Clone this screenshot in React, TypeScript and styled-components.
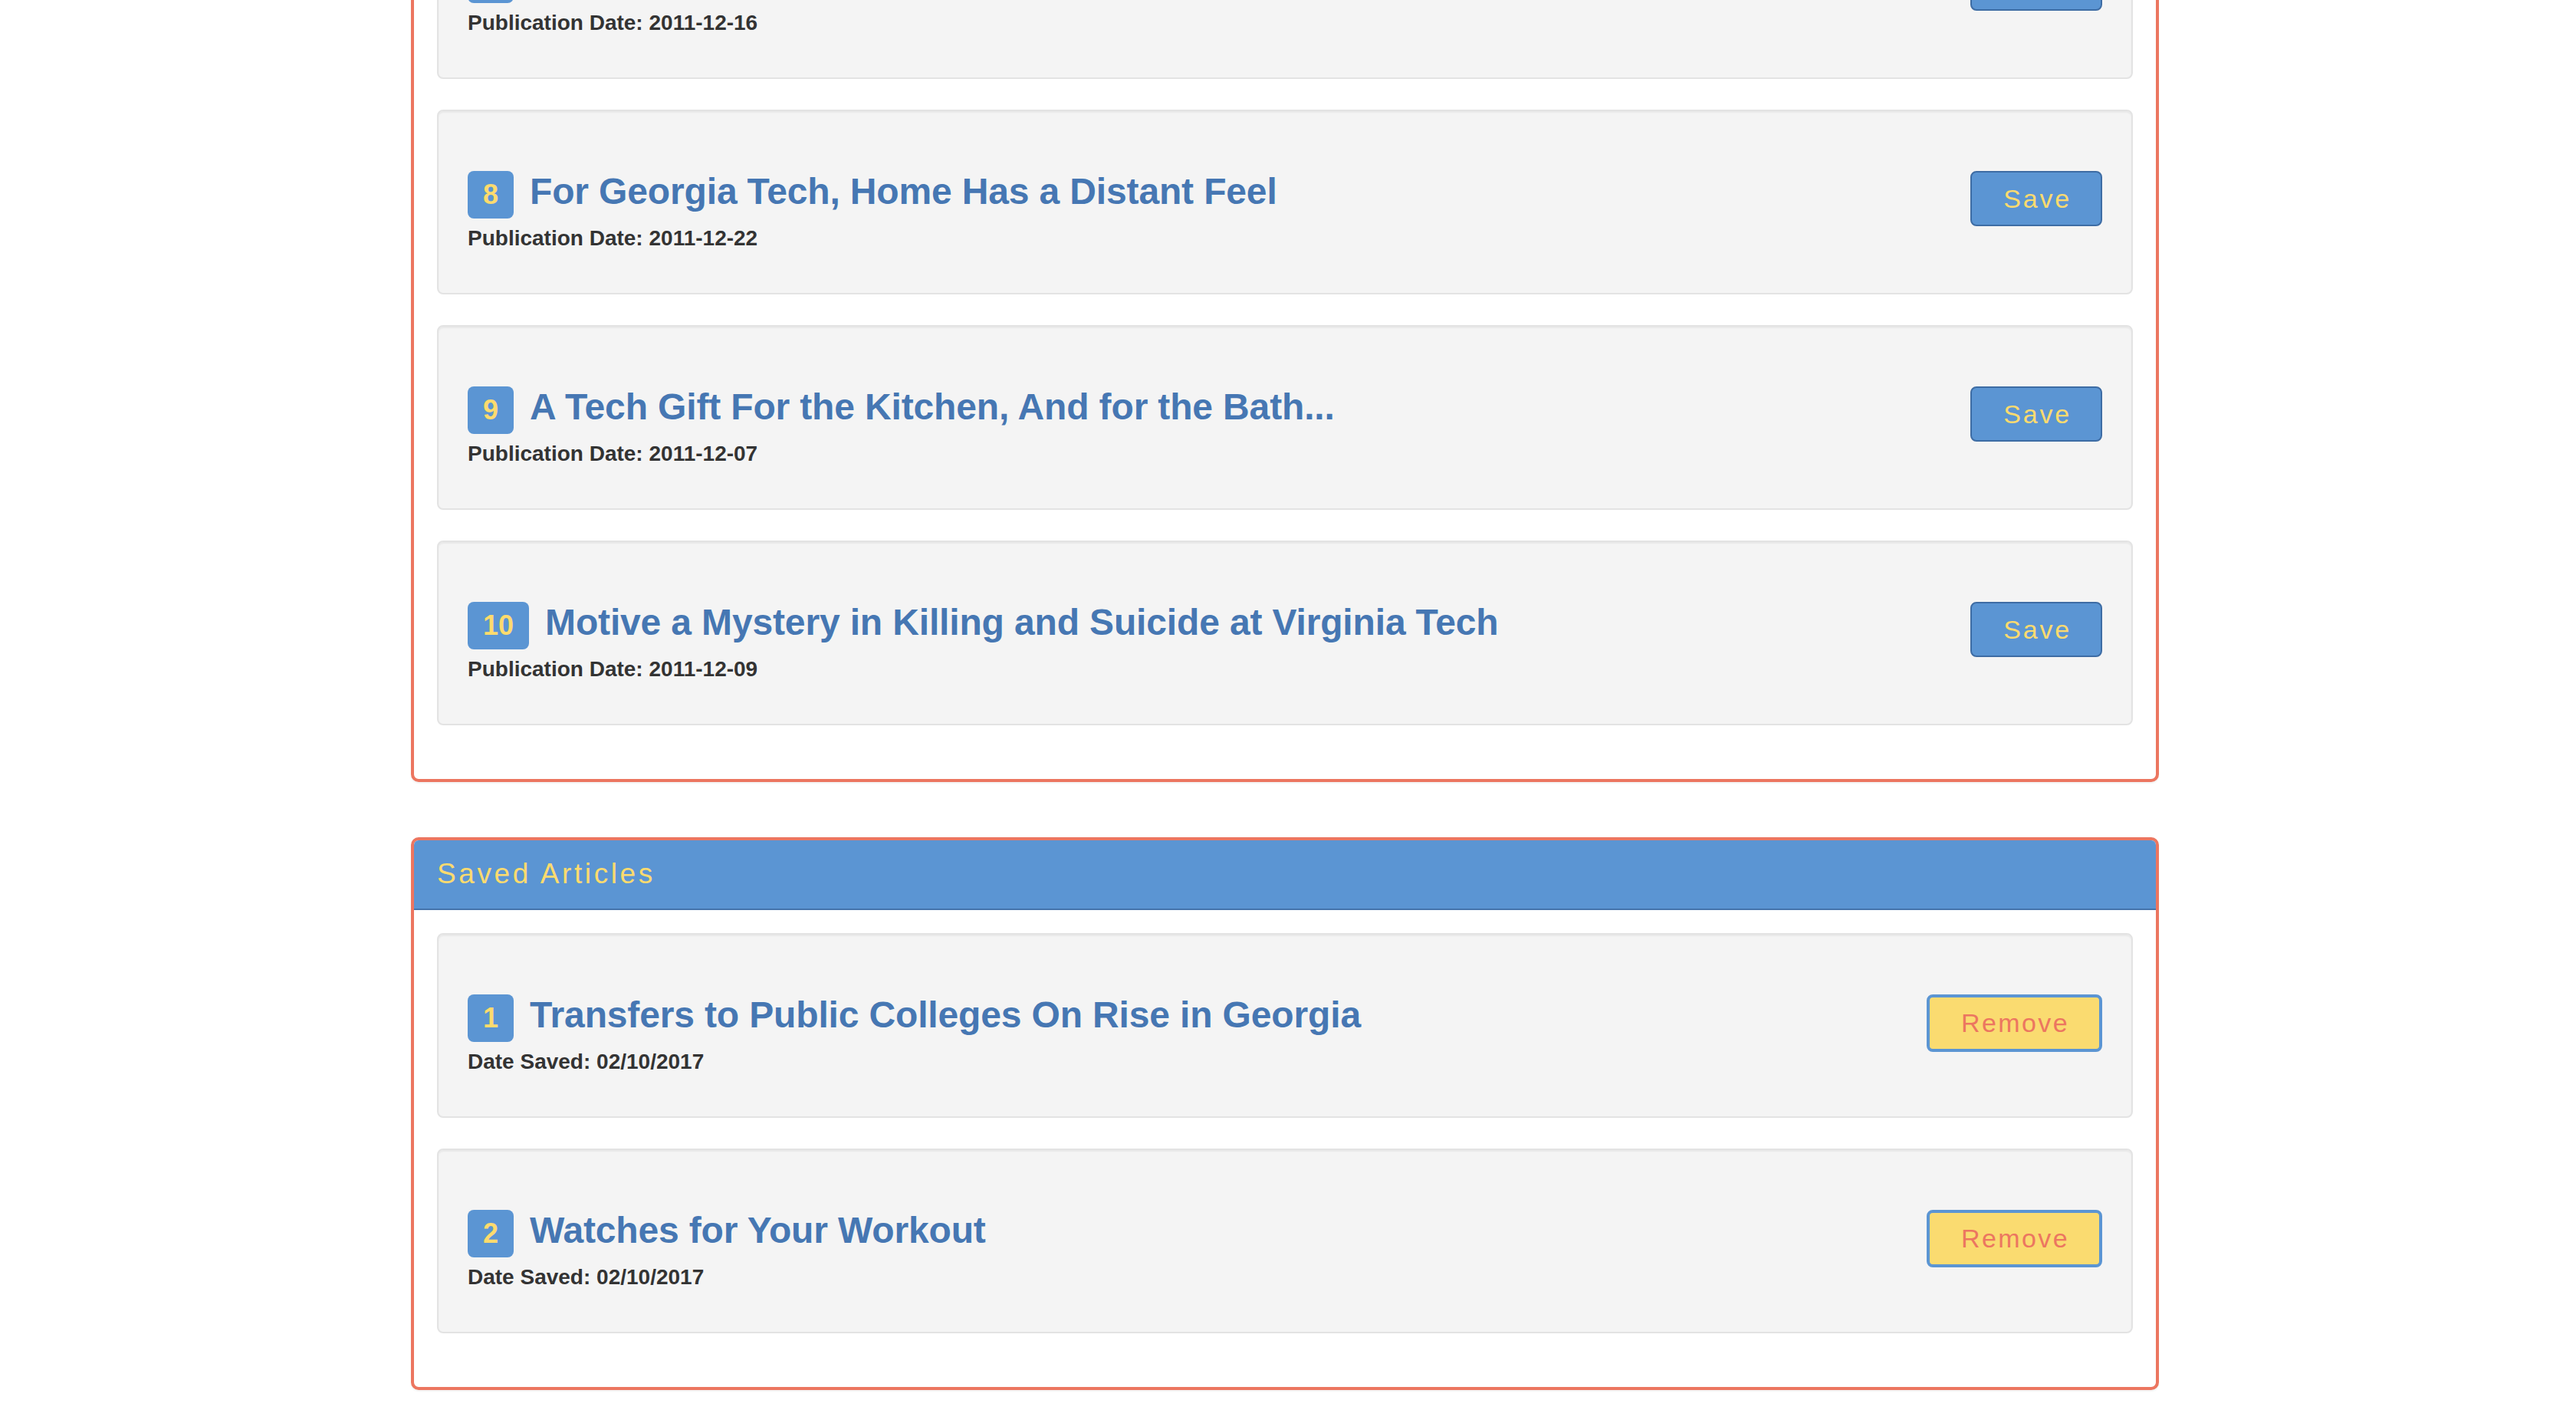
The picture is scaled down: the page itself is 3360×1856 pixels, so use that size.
import React from "react";
import styled, { createGlobalStyle } from "styled-components";

const GlobalStyle = createGlobalStyle`
  html, body {
    margin: 0;
    padding: 0;
    background: #ffffff;
  }
  body {
    font-family: "Liberation Sans", Arial, Helvetica, sans-serif;
    color: #333333;
  }
  * { box-sizing: border-box; }
`;

const Screen = styled.div`
  height: 100vh;
  overflow: hidden;
  padding-right: 8px;
`;

/* the page as scrolled: the top of the results panel is above the viewport */
const Scrolled = styled.div<{ $scroll: number }>`
  margin-top: ${(p) => -p.$scroll}px;
`;

const Container = styled.main`
  width: 2280px;
  margin: 0 auto;
`;

const Panel = styled.section`
  border: 4px solid #ec7660;
  border-radius: 10px;
  background: #ffffff;
  box-shadow: 0 2px 2px rgba(0, 0, 0, 0.05);
  margin-bottom: 72px;
  overflow: hidden;
`;

const PanelHeading = styled.header`
  height: 91px;
  display: flex;
  align-items: center;
  padding: 0 30px 2px;
  background: #5b95d3;
  border-bottom: 2px solid #4574ab;
`;

const PanelTitle = styled.h2`
  margin: 0;
  font-family: "Liberation Sans", Arial, Helvetica, sans-serif;
  font-weight: 400;
  font-size: 37px;
  letter-spacing: 3.6px;
  color: #fddb6e;
`;

const PanelBody = styled.div`
  padding: 30px;
`;

const Well = styled.article`
  display: flex;
  justify-content: space-between;
  align-items: flex-start;
  min-height: 241px;
  padding: 38px;
  margin-bottom: 40px;
  background: #f4f4f4;
  border: 2px solid #e3e3e3;
  border-radius: 8px;
  box-shadow: inset 0 2px 2px rgba(0, 0, 0, 0.05);
`;

const Info = styled.div`
  display: flex;
  flex-direction: column;
`;

const TitleRow = styled.h3`
  display: flex;
  align-items: baseline;
  gap: 21px;
  height: 53px;
  margin: 40px 0 0;
  font-size: 48px;
  line-height: 53px;
  font-weight: 700;
  letter-spacing: -0.15px;
  color: #4677b3;
  white-space: nowrap;
`;

const Badge = styled.span`
  display: inline-block;
  height: 62px;
  padding: 0 20px;
  border-radius: 8px;
  background: #5b95d3;
  color: #fddb6e;
  font-size: 36px;
  line-height: 62px;
  font-weight: 700;
  letter-spacing: 0;
`;

const DateLine = styled.h5`
  margin: 19px 0 18px;
  font-size: 28px;
  line-height: 31px;
  font-weight: 700;
  color: #333333;
`;

const DateValue = styled.span`
  font-weight: 700;
`;

const ActionButton = styled.button<{ $variant: "save" | "remove" }>`
  margin-top: 40px;
  height: ${(p) => (p.$variant === "save" ? 72 : 75)}px;
  padding: 0 ${(p) => (p.$variant === "save" ? 38 : 39)}px 0 41px;
  border-style: solid;
  border-width: ${(p) => (p.$variant === "save" ? 2 : 4)}px;
  border-color: ${(p) => (p.$variant === "save" ? "#3d6ca4" : "#5b95d3")};
  border-radius: 8px;
  background: ${(p) => (p.$variant === "save" ? "#5b95d3" : "#fadb70")};
  color: ${(p) => (p.$variant === "save" ? "#fddb6e" : "#ec7660")};
  font-family: "Liberation Sans", Arial, Helvetica, sans-serif;
  font-size: 34px;
  letter-spacing: ${(p) => (p.$variant === "save" ? 2.8 : 2.4)}px;
  font-weight: 400;
  cursor: pointer;
  flex-shrink: 0;
`;

type Article = { n: number; title: string; date: string };

const results: Article[] = [
  { n: 7, title: "Georgia Tech Tops the Field", date: "2011-12-16" },
  { n: 8, title: "For Georgia Tech, Home Has a Distant Feel", date: "2011-12-22" },
  { n: 9, title: "A Tech Gift For the Kitchen, And for the Bath...", date: "2011-12-07" },
  { n: 10, title: "Motive a Mystery in Killing and Suicide at Virginia Tech", date: "2011-12-09" },
];

const saved: Article[] = [
  { n: 1, title: "Transfers to Public Colleges On Rise in Georgia", date: "02/10/2017" },
  { n: 2, title: "Watches for Your Workout", date: "02/10/2017" },
];

function ArticleWell({
  a,
  label,
  variant,
}: {
  a: Article;
  label: string;
  variant: "save" | "remove";
}) {
  return (
    <Well>
      <Info>
        <TitleRow>
          <Badge>{a.n}</Badge>
          <span>{a.title}</span>
        </TitleRow>
        <DateLine>
          {label} <DateValue>{a.date}</DateValue>
        </DateLine>
      </Info>
      <ActionButton $variant={variant}>{variant === "save" ? "Save" : "Remove"}</ActionButton>
    </Well>
  );
}

export default function App() {
  return (
    <>
      <GlobalStyle />
      <Screen>
        <Scrolled $scroll={172}>
          <Container>
            <Panel>
              <PanelBody>
                {results.map((a) => (
                  <ArticleWell key={a.n} a={a} label="Publication Date:" variant="save" />
                ))}
              </PanelBody>
            </Panel>
            <Panel>
              <PanelHeading>
                <PanelTitle>Saved Articles</PanelTitle>
              </PanelHeading>
              <PanelBody>
                {saved.map((a) => (
                  <ArticleWell key={a.n} a={a} label="Date Saved:" variant="remove" />
                ))}
              </PanelBody>
            </Panel>
          </Container>
        </Scrolled>
      </Screen>
    </>
  );
}
